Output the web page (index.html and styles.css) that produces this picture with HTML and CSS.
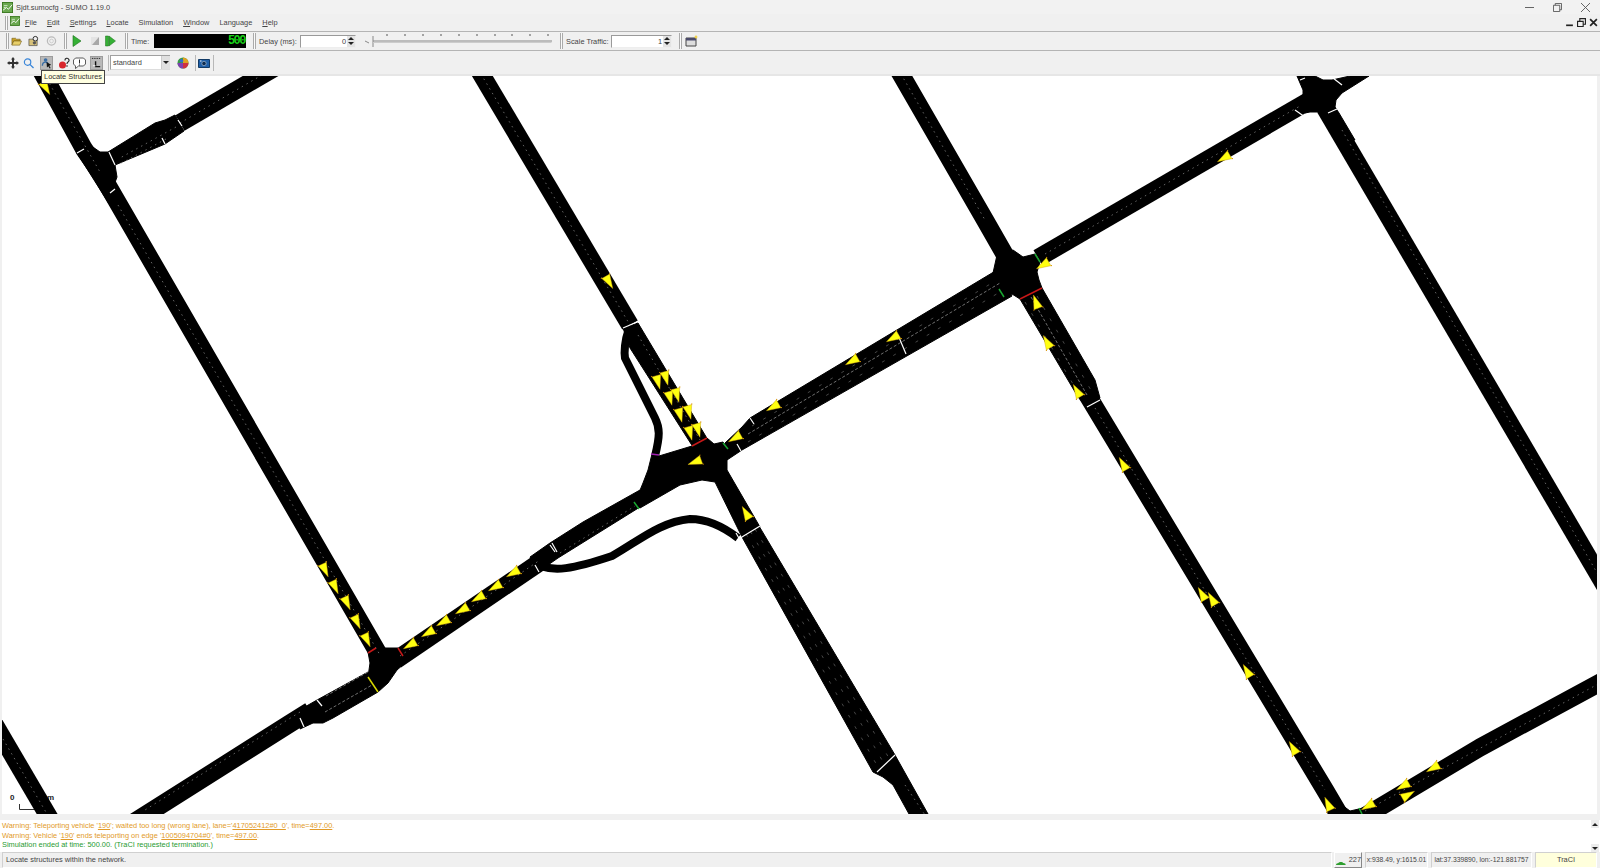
FILE: index.html
```html
<!DOCTYPE html>
<html lang="en">
<head>
<meta charset="utf-8">
<title>Sjdt.sumocfg - SUMO 1.19.0</title>
<link rel="stylesheet" href="styles.css">
</head>
<body>
<div class="app">
  <header class="titlebar">
    <svg class="appicon" viewBox="0 0 12 12"><rect x=".5" y=".5" width="11" height="11" fill="#6aa84f" stroke="#38761d"/><path d="M1 9l4-3 2 2 4-5" fill="none" stroke="#fff"/><path d="M2 4h4M2 6h2" stroke="#d9ead3"/></svg>
    <span class="title-text">Sjdt.sumocfg - SUMO 1.19.0</span>
    <div class="winctl">
      <svg viewBox="0 0 10 10"><path d="M0 5h10" stroke="#555"/></svg>
      <svg viewBox="0 0 10 10"><path d="M.5 2.5h7v7h-7zM2.5 2.5v-2h7v7h-2" fill="none" stroke="#555"/></svg>
      <svg viewBox="0 0 10 10"><path d="M0 0l10 10M10 0L0 10" stroke="#555"/></svg>
    </div>
  </header>

  <nav class="menubar">
    <span class="grip"></span>
    <svg class="menuicon" viewBox="0 0 12 12"><rect x=".5" y=".5" width="11" height="11" fill="#6aa84f" stroke="#38761d"/><path d="M1 9l4-3 2 2 4-5" fill="none" stroke="#fff"/><path d="M2 4h4M2 6h2" stroke="#d9ead3"/></svg>
    <div class="menus">
      <span><u>F</u>ile</span><span><u>E</u>dit</span><span><u>S</u>ettings</span><span><u>L</u>ocate</span><span>Simulation</span><span><u>W</u>indow</span><span>Language</span><span><u>H</u>elp</span>
    </div>
    <div class="mdictl">
      <span class="mdib"><svg viewBox="0 0 8 8"><path d="M1 6.5h6" stroke="#222" stroke-width="1.5"/></svg></span>
      <span class="mdib"><svg viewBox="0 0 8 8"><path d="M.5 3h5v4.500h-5zM2.500 3V.5h5v5H6" fill="none" stroke="#222"/></svg></span>
      <span class="mdib"><svg viewBox="0 0 8 8"><path d="M1 1l6 6M7 1L1 7" stroke="#222" stroke-width="1.500"/></svg></span>
    </div>
  </nav>

  <div class="toolbar tb1">
    <span class="grip g1"></span>
    <svg class="ic i-open" viewBox="0 0 12 12"><path d="M1 3h4l1 1h4v2H3L1 10z" fill="#c9a227" stroke="#6b5514" stroke-width=".6"/><path d="M3 6h8.500L9.500 10.500H1z" fill="#e8cf6a" stroke="#6b5514" stroke-width=".6"/></svg>
    <svg class="ic i-reload" viewBox="0 0 12 12"><path d="M1 4h4l1 1h4v6H1z" fill="#d8c27a" stroke="#444" stroke-width=".7"/><circle cx="8" cy="3.500" r="2.500" fill="#eee" stroke="#222"/><circle cx="7" cy="8" r="1.800" fill="#555"/></svg>
    <svg class="ic i-restart" viewBox="0 0 12 12"><circle cx="6" cy="6" r="4.500" fill="none" stroke="#bbb" stroke-width="1.400"/><circle cx="6" cy="6" r="2" fill="none" stroke="#ccc"/></svg>
    <span class="sep s1"></span>
    <svg class="ic i-play" viewBox="0 0 10 12"><path d="M1 .5l8 5.500-8 5.500z" fill="#35b035" stroke="#1a6f1a" stroke-width=".6"/></svg>
    <svg class="ic i-stop" viewBox="0 0 10 12"><path d="M1 2h8v8H1z" fill="#e4e4e4"/><path d="M9 2v8H2z" fill="#a8a8a8"/></svg>
    <svg class="ic i-step" viewBox="0 0 11 12"><path d="M.5 1h3v10h-3z" fill="#35b035" stroke="#1a6f1a" stroke-width=".5"/><path d="M4 1l6.500 5L4 11z" fill="#35b035" stroke="#1a6f1a" stroke-width=".5"/></svg>
    <span class="sep s2"></span>
    <label class="lbl l-time">Time:</label>
    <div class="lcd">500</div>
    <span class="sep s3"></span>
    <label class="lbl l-delay">Delay (ms):</label>
    <div class="spin sp-delay"><span class="val">0</span><span class="arrows"><i class="up"></i><i class="down"></i></span></div>
    <svg class="slider" viewBox="0 0 190 16"><path d="M0 8l4 2M8 3v11M8 8h179" stroke="#888" fill="none"/><path d="M186.500 8.500H8" stroke="#ccc" transform="translate(0 1)"/><path d="M22 1v2M40 1v2M58 1v2M76 1v2M94 1v2M112 1v2M130 1v2M147 1v2M165 1v2M183 1v2" stroke="#555"/></svg>
    <span class="sep s4"></span>
    <label class="lbl l-scale">Scale Traffic:</label>
    <div class="spin sp-scale"><span class="val">1</span><span class="arrows"><i class="up"></i><i class="down"></i></span></div>
    <span class="sep s5"></span>
    <svg class="ic i-win" viewBox="0 0 13 12"><path d="M1 3h10v8H1z" fill="#ddd" stroke="#444"/><path d="M1 3h10v2.500H1z" fill="#4a4a6a"/><path d="M11 0l1 1.500 1 .5-1 .5-1 1.500-1-1.500-1-.5 1-.5z" fill="#f0d040"/></svg>
  </div>

  <div class="toolbar tb2">
    <svg class="ic2 m-move" viewBox="0 0 12 12"><path d="M6 0l2 2.500H7V5h2.500V4L12 6 9.500 8V7H7v2.500h1L6 12 4 9.500h1V7H2.500v1L0 6l2.500-2v1H5V2.500H4z" fill="#333"/></svg>
    <svg class="ic2 m-zoom" viewBox="0 0 12 12"><circle cx="5" cy="5" r="3.500" fill="none" stroke="#3a86d8" stroke-width="1.300"/><path d="M7.500 7.500l4 4" stroke="#3a86d8" stroke-width="1.500"/></svg>
    <span class="pressed p-locate"><svg viewBox="0 0 12 12"><circle cx="5" cy="2.800" r="2" fill="#3a6ea5"/><path d="M1.500 9c0-3 1.500-4 3.500-4s2 .5 2.500 1" fill="none" stroke="#3a6ea5" stroke-width="1.500"/><path d="M6 5l5 3-2 1 1.500 2.500-1 .5L8 9.500 6.500 11z" fill="#111"/></svg></span>
    <svg class="ic2 m-bug" viewBox="0 0 12 12"><ellipse cx="4.500" cy="8" rx="3.500" ry="3.500" fill="#d8262c"/><path d="M7 3.500a2 2 0 1 1 3 1.500c-1 .6-1 1-1 2" fill="none" stroke="#222" stroke-width="1.100"/><circle cx="9" cy="9" r=".8" fill="#222"/></svg>
    <svg class="ic2 m-msg" viewBox="0 0 13 12"><path d="M2.500 1h8l2 2v4l-2 2h-5L2.500 11.500V9l-2-2V3z" fill="#fff" stroke="#333" stroke-width=".8"/><path d="M6.500 2.500v4M6.500 7.500v1" stroke="#333"/></svg>
    <span class="pressed p-map"><svg viewBox="0 0 12 12"><path d="M1 1h10" stroke="#222" stroke-dasharray="1.500 1"/><path d="M5 4v6h5" fill="none" stroke="#111" stroke-width="1.500"/><path d="M2 9h3" stroke="#fff"/></svg></span>
    <span class="sep2"></span>
    <div class="combo"><span class="combotext">standard</span><span class="combobtn"><i class="down"></i></span></div>
    <svg class="ic2 m-color" viewBox="0 0 12 12"><circle cx="6" cy="6" r="5.500" fill="#3a9a45"/><path d="M6 6V.5A5.500 5.500 0 0 1 11.500 6z" fill="#e0a020"/><path d="M6 6h5.500A5.500 5.500 0 0 1 6 11.500z" fill="#d03040"/><path d="M6 6v5.500A5.500 5.500 0 0 1 .5 6z" fill="#8040b0"/><circle cx="4.500" cy="3.800" r="1.800" fill="#2f6fd0"/></svg>
    <span class="sep2 sp3"></span>
    <svg class="ic2 m-cam" viewBox="0 0 12 10"><path d="M.5 1.500h11v8H.5z" fill="#1f5fa8" stroke="#123a66"/><circle cx="6" cy="5.500" r="2.200" fill="#0d2c52" stroke="#bcd" stroke-width=".6"/><path d="M2 3h1.500" stroke="#fff"/></svg>
    <span class="sep2 sp4"></span>
    <div class="tooltip">Locate Structures</div>
  </div>

  <main class="canvas">
    <svg class="map" viewBox="2 76 1595 738" preserveAspectRatio="none">
      <defs>
        <g id="car"><path d="M7.500 0L-6.500 -4.500-6.500 4.500z" class="carbody"/><path d="M-6.500 -4.500l-1 -.5M-6.500 4.500l-1 .5" class="blink"/></g>
      </defs>
      <text x="10" y="800" class="scale">0</text>
      <text x="47" y="800" class="scale">m</text>
      <path d="M19.500 804v5.500H40" class="scaleline"/>

      <g class="roads">
        <path d="M20 32L84 149 100 172 385 665"/>
        <path d="M300 53L180 123"/>
        <path d="M461 40L630 325"/>
        <path d="M880 38L985 220 1005 255"/>
        <path d="M1085 391L1325 790 1345 824"/>
        <path d="M1325 108L1625 620"/>
        <path d="M1038 258L1319 95"/>
        <path d="M1345 828L1480 747.500 1625 669"/>
        <path d="M310 711L290 723.500 120 831"/>
        <path d="M396 660L546 558"/>
        <path d="M-15 708L60 836"/>
      </g>
      <g class="ramps">
        <path d="M628 332C625 340 624 352 625 358L655 418C660 428 660 436 655 456"/>
        <path d="M540 566C555 571 570 570 612 556 640 540 660 522 690 519 708 519 725 528 738 538"/>
      </g>
      <g class="fills">
        <polygon points="77,153 90,145 100,152 108,152 115,165 117,177 113,188 122,210 113,210"/>
        <polygon points="108,152 155,123 165,120 175,115 184,131 165,144 115,165"/>
        <polygon points="623,328 638,323 708,440 693,447 630,348"/>
        <polygon points="652,454 659,456 692,446 707,438 714,444 723,442 730,452 727,460 727,470 760,527 742,537 715,482 702,480 680,485 640,508 636,500 643,483 648,470"/>
        <polygon points="640,490 583,522 550,543 530,557 538,572 558,558 640,507"/>
        <polygon points="368,652 376,648 385,648 398,648 403,657 405,663 397,670 388,683 378,692 368,677 370,663"/>
        <polygon points="368,672 317,700 303,708 300,729 313,723 323,723 333,718 378,692"/>
        <polygon points="725,443 742,427 750,418 997,270 1012,296 742,450 727,460"/>
        <polygon points="997,255 1013,250 1023,257 1035,254 1040,262 1037,272 1039,280 1042,288 1020,299 1012,294 1004,297 993,273"/>
        <polygon points="1020,299 1042,288 1095,380 1100,398 1087,407 1078,397"/>
        <polygon points="742,537 759,526 895,755 928,814 909,814 893,785 883,777 873,772"/>
        <polygon points="1297,76 1315,76 1323,80 1332,80 1350,76 1369,76 1342,93 1336,100 1335,107 1339,113 1355,140 1338,140 1322,113 1318,112 1310,112 1305,113 1295,102 1303,95 1303,90"/>
        <polygon points="1328,814 1326,790 1342,805 1350,811 1372,806 1385,814"/>
      </g>
      <g class="dash">
        <path d="M44 74L100 172M118 205L380 655"/>
        <path d="M262 75L180 123M176 127L120 158M166 139L118 165"/>
        <path d="M481 74L630 325"/>
        <path d="M638 335L700 440"/>
        <path d="M901 74L985 220"/>
        <path d="M1095 408L1325 790"/>
        <path d="M1342 130L1600 578"/>
        <path d="M1045 254L1300 106"/>
        <path d="M1365 811L1600 683"/>
        <path d="M300 712L145 810"/>
        <path d="M400 656L540 560"/>
        <path d="M3 739L50 819"/>
        <path d="M560 553L635 506"/>
        <path d="M905 785L925 815"/>
      </g>
      <g class="dash solidish">
        <path d="M748 434L1000 283"/>
        <path d="M1031 297L1087 395"/>
        <path d="M326 696L368 672M325 712L372 685"/>
      </g>
      <g class="dash sparse">
        <path d="M746 534L878.500 768M750.500 531.500L884 763.500M755 529L889.500 759"/>
        <path d="M752 426L992 283M748 442L1000 292"/>
        <path d="M1025 302L1080 396M1037 296L1092 392"/>
      </g>

      <g class="wbar">
        <path d="M623 328L637 322"/><path d="M550 545L555 552"/><path d="M750 418L754 424"/><path d="M737 444L741 451"/><path d="M737 540L760 526"/><path d="M736 533L740 540"/><path d="M535 565L539 572"/><path d="M1087 407L1100 400"/><path d="M317 700L322 706"/><path d="M300 718L304 727"/><path d="M552 543L557 552"/><path d="M898 335L906 354"/><path d="M77 153L84 149"/><path d="M109 152L115 165"/><path d="M178 120L182 126"/><path d="M162 138L165 144"/><path d="M110 193L115 189"/><path d="M877 772L895 755"/><path d="M1300 80L1305 78"/><path d="M1333 78L1342 85"/><path d="M1295 110L1305 117"/><path d="M1328 113L1337 109"/>
      </g>
      <g class="sig">
        <path class="red" d="M692 446L707 438"/><path class="grn" d="M723 443L728 449"/><path class="pur" d="M651 454L659 455"/><path class="grn" d="M634 502L639 509"/>
        <path class="grn" d="M1035 254L1040 262"/><path class="red" d="M1020 299L1042 288"/><path class="grn" d="M999 289L1004 297"/>
        <path class="red" d="M368 653L376 648"/><path class="red" d="M398 648L403 656"/><path class="yel" d="M368 677L378 692"/><path class="grn" d="M1359 808L1362 814"/>
      </g>

      <g>
        <use href="#car" transform="translate(46 88) rotate(60)"/>
        <use href="#car" transform="translate(609 282) rotate(60)"/>
        <use href="#car" transform="translate(658 382) rotate(75)"/>
        <use href="#car" transform="translate(666 378) rotate(75)"/>
        <use href="#car" transform="translate(670 398) rotate(75)"/>
        <use href="#car" transform="translate(677 395) rotate(75)"/>
        <use href="#car" transform="translate(680 415) rotate(75)"/>
        <use href="#car" transform="translate(689 412) rotate(75)"/>
        <use href="#car" transform="translate(690 433) rotate(75)"/>
        <use href="#car" transform="translate(698 430) rotate(75)"/>
        <use href="#car" transform="translate(695 462) rotate(160)"/>
        <use href="#car" transform="translate(735 438) rotate(150)"/>
        <use href="#car" transform="translate(773 407) rotate(150)"/>
        <use href="#car" transform="translate(852 361) rotate(150)"/>
        <use href="#car" transform="translate(893 338) rotate(150)"/>
        <use href="#car" transform="translate(746 513) rotate(240)"/>
        <use href="#car" transform="translate(1224 158) rotate(150)"/>
        <use href="#car" transform="translate(1043 265) rotate(150)"/>
        <use href="#car" transform="translate(1036 302) rotate(250)"/>
        <use href="#car" transform="translate(1047 342) rotate(240)"/>
        <use href="#car" transform="translate(1077 391) rotate(240)"/>
        <use href="#car" transform="translate(1123 464) rotate(240)"/>
        <use href="#car" transform="translate(1202 594) rotate(240)"/>
        <use href="#car" transform="translate(1212 599) rotate(240)"/>
        <use href="#car" transform="translate(1247 671) rotate(240)"/>
        <use href="#car" transform="translate(1293 748) rotate(240)"/>
        <use href="#car" transform="translate(1328 804) rotate(245)"/>
        <use href="#car" transform="translate(1368 806) rotate(150)"/>
        <use href="#car" transform="translate(1403 786) rotate(150)"/>
        <use href="#car" transform="translate(1408 795) rotate(-30)"/>
        <use href="#car" transform="translate(1433 768) rotate(150)"/>
        <use href="#car" transform="translate(325 570) rotate(65)"/>
        <use href="#car" transform="translate(335 587) rotate(65)"/>
        <use href="#car" transform="translate(347 603) rotate(65)"/>
        <use href="#car" transform="translate(357 622) rotate(65)"/>
        <use href="#car" transform="translate(367 640) rotate(65)"/>
        <use href="#car" transform="translate(410 645) rotate(150)"/>
        <use href="#car" transform="translate(428 633) rotate(150)"/>
        <use href="#car" transform="translate(443 622) rotate(150)"/>
        <use href="#car" transform="translate(462 610) rotate(150)"/>
        <use href="#car" transform="translate(478 598) rotate(150)"/>
        <use href="#car" transform="translate(495 587) rotate(150)"/>
        <use href="#car" transform="translate(513 573) rotate(150)"/>
      </g>
    </svg>
  </main>

  <section class="messages">
    <div class="msglines">
      <p class="warn">Warning: Teleporting vehicle '<u>190</u>'; waited too long (wrong lane), lane='<u>417052412#0_0</u>', time=<u>497.00</u>.</p>
      <p class="warn">Warning: Vehicle '<u>190</u>' ends teleporting on edge '<u>1005094704#0</u>', time=<u>497.00</u>.</p>
      <p class="ok">Simulation ended at time: 500.00. (TraCI requested termination.)</p>
    </div>
    <div class="msgscroll"><span class="sb"><i class="up"></i></span><span class="sb"><i class="down"></i></span></div>
  </section>

  <footer class="statusbar">
    <div class="st st-main">Locate structures within the network.</div>
    <div class="st-btn"><svg viewBox="0 0 12 6"><path d="M0 5.500c0-2 2-2 3-2.500 1-1.500 5-1.500 6 0 2 .5 3 .5 3 2.500z" fill="#2e9e2e"/></svg><span>227</span></div>
    <div class="st st-xy">x:938.49, y:1615.01</div>
    <div class="st st-ll">lat:37.339890, lon:-121.881757</div>
    <div class="st st-traci">TraCI</div>
  </footer>
</div>
</body>
</html>
```

FILE: styles.css
```css
* { box-sizing: border-box; }
html, body { margin: 0; padding: 0; height: 868px; overflow: hidden; }
body { font-family: "Liberation Sans", Arial, sans-serif; font-size: 7.400px; color: #333; background: #f0f0f0; }
.app { display: flex; flex-direction: column; width: 1600px; height: 868px; }

.titlebar { height: 14px; display: flex; align-items: center; padding-left: 2px; background: #f2f2f2; }
.appicon { width: 11px; height: 11px; }
.title-text { margin-left: 3px; font-size: 7.400px; color: #444; }
.winctl { margin-left: auto; display: flex; margin-right: 10px; gap: 19px; }
.winctl svg { width: 9px; height: 9px; }

.menubar { height: 17px; display: flex; align-items: center; background: #f0f0f0; padding: 0 2px 0 5px; }
.grip { width: 3px; height: 14px; flex: none; border-left: 1px solid #aaa; border-right: 1px solid #aaa; background: #fafafa; }
.menuicon { width: 10px; height: 10px; margin: 0 0 3px 2px; }
.menus { display: flex; margin-left: 5px; gap: 10px; font-size: 7.400px; color: #444; }
.mdictl { margin-left: auto; display: flex; gap: 3px; }
.mdib { width: 9px; height: 9px; display: block; }
.mdib svg { display: block; width: 9px; height: 9px; }

.toolbar { display: flex; align-items: center; flex: none; position: relative; }
.tb1 { height: 20px; border-top: 1px solid #b4b4b4; border-bottom: 1px solid #b4b4b4; padding-left: 6px; }
.g1 { height: 16px; }
.ic { height: 12px; flex: none; }
.i-open { width: 11px; margin-left: 2px; }
.i-reload { width: 11px; margin-left: 6px; }
.i-restart { width: 11px; margin-left: 7px; }
.sep { width: 3px; height: 16px; flex: none; border-left: 1px solid #aaa; border-right: 1px solid #aaa; background: #fafafa; }
.s1 { margin-left: 7px; }
.i-play { width: 10px; margin-left: 5px; }
.i-stop { width: 10px; margin-left: 8px; }
.i-step { width: 11px; margin-left: 5px; }
.s2 { margin-left: 9px; }
.lbl { font-size: 7.400px; color: #444; white-space: nowrap; flex: none; }
.l-time { margin-left: 3px; width: 19px; }
.lcd { width: 92px; height: 14px; margin-left: 4px; background: #000; color: #18d018; font: bold 12px/14px "Liberation Mono", monospace; text-align: right; padding-right: 1px; letter-spacing: -1.500px; flex: none; }
.s3 { margin-left: 7px; }
.l-delay { margin-left: 3px; width: 37px; }
.spin { height: 13px; margin-left: 4px; display: flex; background: #fff; border: 1px solid #9a9a9a; border-right-color: #eee; border-bottom-color: #eee; font-size: 7.400px; line-height: 11px; flex: none; }
.val { flex: 1; text-align: right; padding-right: 1px; color: #444; }
.arrows { width: 8px; display: flex; flex-direction: column; background: #e4e4e4; }
.arrows i { flex: 1; display: block; margin: 1px auto 0; }
.up { width: 0; height: 0; border-left: 3px solid transparent; border-right: 3px solid transparent; border-bottom: 3px solid #222; display: block; }
.down { width: 0; height: 0; border-left: 3px solid transparent; border-right: 3px solid transparent; border-top: 3px solid #222; display: block; }
.arrows .up { flex: none; }
.arrows .down { flex: none; margin-top: 2px; }
.sp-delay { width: 56px; }
.slider { width: 190px; height: 16px; margin-left: 9px; flex: none; }
.s4 { margin-left: 5px; }
.l-scale { margin-left: 3px; width: 42px; }
.sp-scale { width: 61px; margin-left: 3px; }
.s5 { margin-left: 7px; }
.i-win { width: 13px; margin-left: 3px; }

.tb2 { height: 25px; padding: 0 0 0 7px; border-bottom: 2px solid #e6e6e6; background: #f0f0f0; }
.ic2 { height: 12px; flex: none; }
.m-move { width: 12px; }
.m-zoom { width: 11px; margin-left: 4px; }
.pressed { width: 13px; height: 14px; background: #b8b8b8; border: 1px solid #9c9c9c; display: block; flex: none; padding: 0; }
.pressed svg { display: block; width: 11px; height: 12px; }
.p-locate { margin-left: 6px; }
.m-bug { width: 12px; margin-left: 5px; }
.m-msg { width: 13px; margin-left: 3px; }
.p-map { margin-left: 4px; }
.sep2 { width: 1px; height: 16px; background: #b8b8b8; margin-left: 5px; flex: none; }
.combo { width: 60px; height: 15px; margin-left: 1px; display: flex; background: #fff; border: 1px solid #a0a0a0; border-right: 0; border-bottom-color: #ddd; flex: none; }
.combotext { flex: 1; padding-left: 2px; font-size: 7.400px; line-height: 13px; color: #444; }
.combobtn { width: 9px; background: #e0e0e0; border-left: 1px solid #ccc; display: flex; align-items: center; justify-content: center; }
.m-color { width: 12px; margin-left: 7px; }
.sp3 { margin-left: 6px; }
.m-cam { width: 12px; margin-left: 2px; }
.sp4 { margin-left: 3px; }
.tooltip { position: absolute; left: 41px; top: 19px; width: 64px; height: 14px; background: #ffffe1; border: 1px solid #444; font-size: 7.400px; line-height: 12px; text-align: center; color: #333; z-index: 5; white-space: nowrap; }

.canvas { height: 738px; flex: none; padding: 0 3px 0 2px; background: #f0f0f0; }
.map { display: block; width: 1595px; height: 738px; background: #fff; overflow: hidden; }
.roads path { fill: none; stroke: #000; stroke-width: 18; stroke-linejoin: round; }
.ramps path { fill: none; stroke: #000; stroke-width: 8; stroke-linejoin: round; }
.fills polygon { fill: #000; stroke: #000; stroke-width: 1; stroke-linejoin: round; }
.dash path { fill: none; stroke: #aaa; stroke-width: .6; stroke-dasharray: 1.500 4; }
.solidish path { stroke: #bbb; stroke-dasharray: 3 2; }
.sparse path { stroke-dasharray: 3 10; stroke: #777; }
.wbar path { fill: none; stroke: #fff; stroke-width: 1.200; }
.sig path { fill: none; stroke-width: 1.500; }
.red { stroke: #c81818; }
.grn { stroke: #18a830; }
.pur { stroke: #a020b0; }
.yel { stroke: #d8d800; }
.carbody { fill: #ffff10; stroke: #d0a010; stroke-width: .4; }
.blink { stroke: #d89000; stroke-width: 1; }
.scale { font: bold 8px "Liberation Sans", sans-serif; fill: #222; }
.scaleline { fill: none; stroke: #333; stroke-width: 1; }

.messages { height: 38px; flex: none; display: flex; background: #fff; border-top: 6px solid #f0f0f0; }
.msglines { flex: 1; padding: 1px 0 0 2px; font-size: 7.400px; line-height: 9.500px; }
.msglines p { margin: 0; white-space: nowrap; }
.warn { color: #e29a28; }
.ok { color: #1f9a30; }
.msgscroll { width: 8px; display: flex; flex-direction: column; justify-content: space-between; background: #fff; margin-right: 1px; }
.sb { height: 8px; background: #ececec; display: flex; align-items: center; justify-content: center; }

.statusbar { height: 16px; flex: none; display: flex; padding-left: 2px; padding-right: 3px; gap: 3px; background: #f0f0f0; font-size: 7.400px; line-height: 14px; color: #444; }
.st { border: 1px solid #d0d0d0; border-right-color: #fff; border-bottom-color: #fff; white-space: nowrap; overflow: hidden; }
.st-main { flex: 1; padding-left: 3px; margin-right: -1px; }
.st-btn { width: 28px; display: flex; align-items: center; gap: 3px; padding-left: 1px; border: 1px solid #fff; border-right-color: #888; border-bottom-color: #888; }
.st-btn svg { width: 11px; height: 6px; margin-top: 5px; }
.st-xy { width: 63px; text-align: center; font-size: 6.800px; }
.st-ll { width: 101px; text-align: center; font-size: 6.800px; }
.st-traci { width: 62px; background: #ffffdc; text-align: center; }
```
